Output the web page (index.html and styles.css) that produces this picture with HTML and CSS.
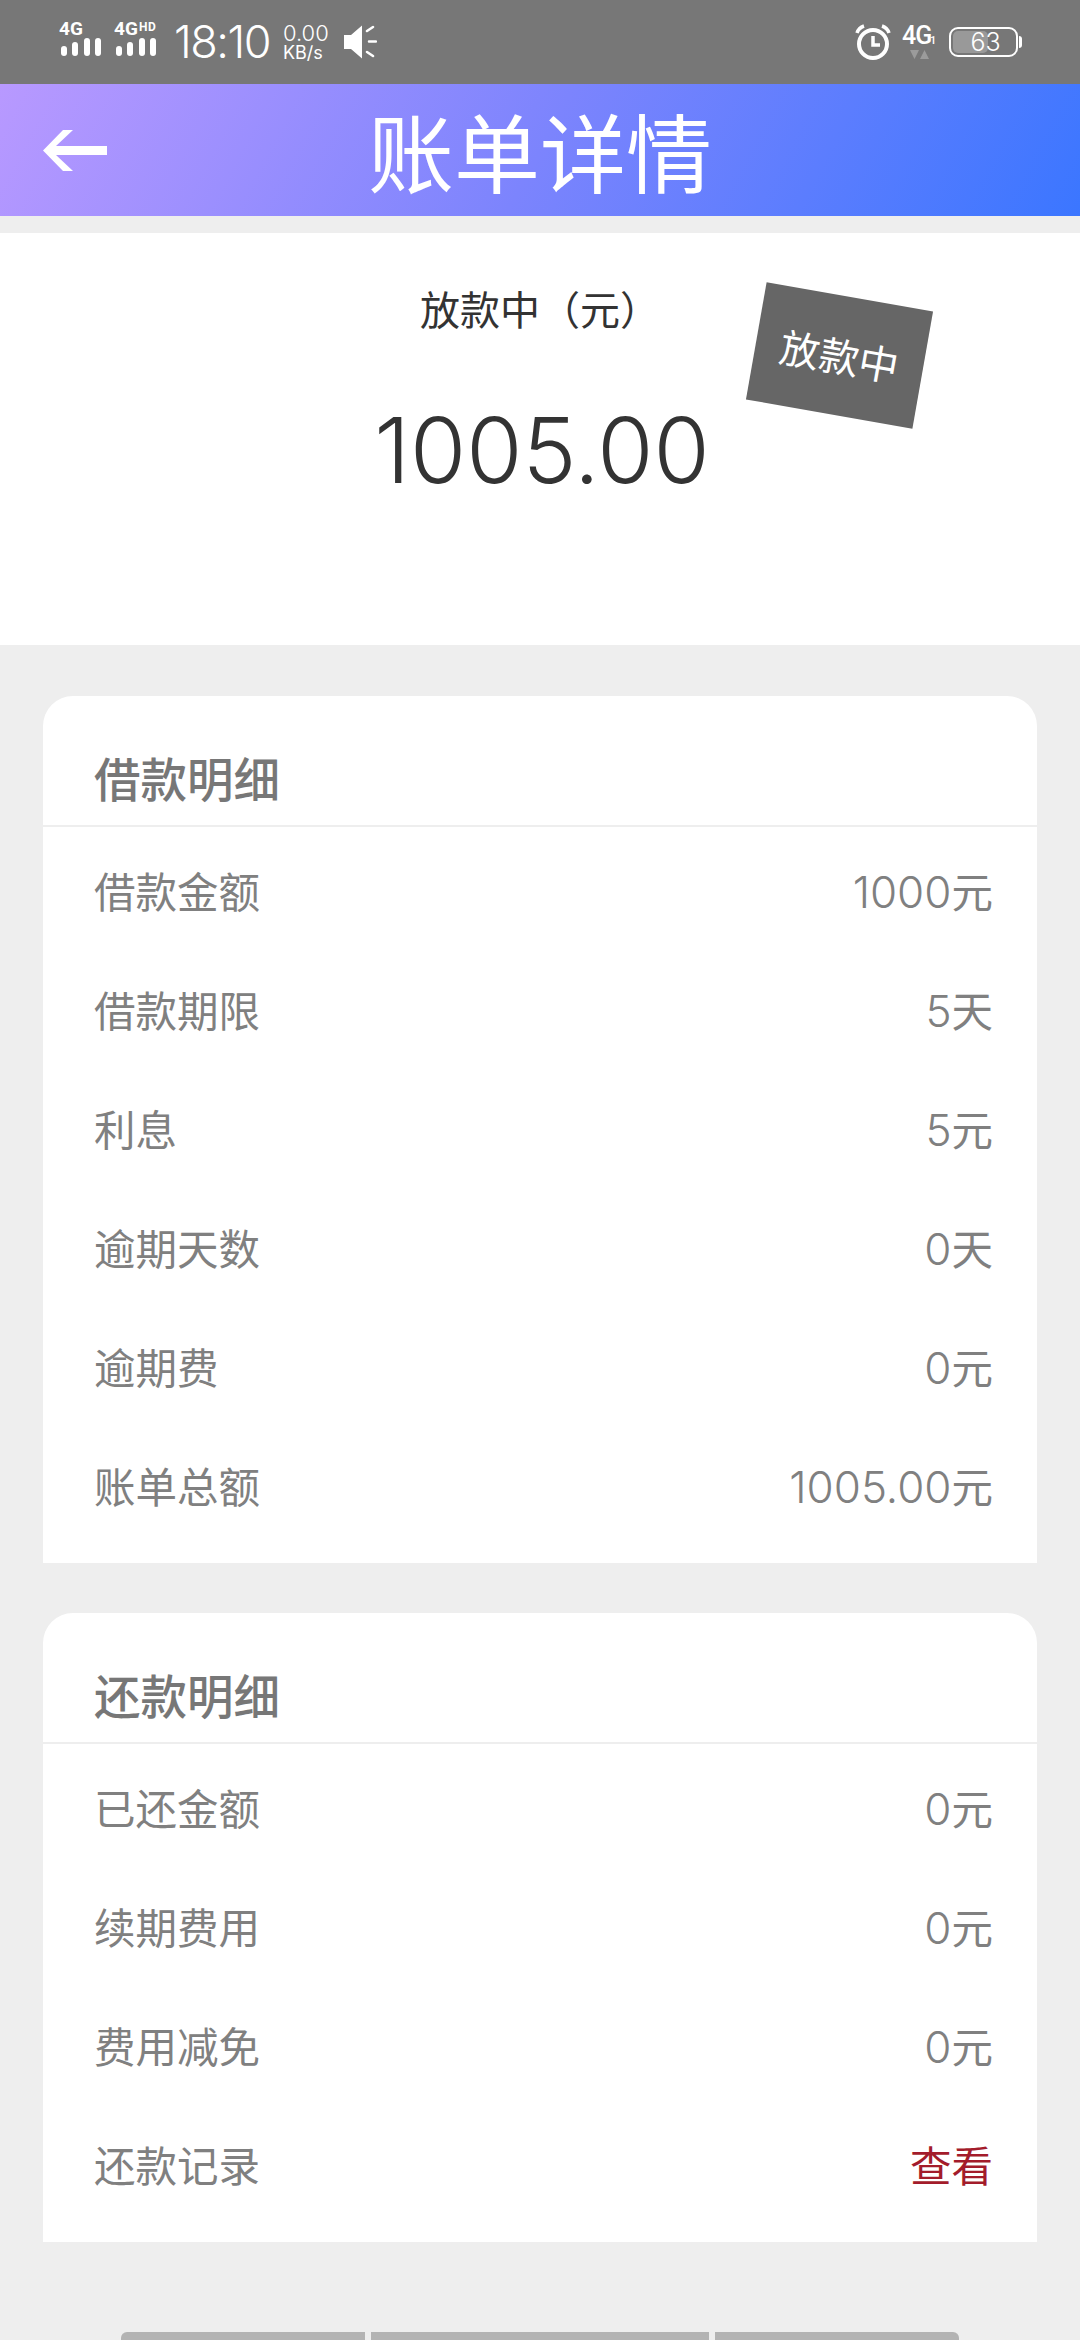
FILE: index.html
```html
<!DOCTYPE html>
<html lang="zh-CN">
<head>
<meta charset="utf-8">
<title>账单详情</title>
<link rel="stylesheet" href="styles.css">
</head>
<body>
<div class="page">
  <div class="status">
    <div class="status-left">
      <svg class="sig" width="44" height="46" viewBox="0 -6 44 46">
        <text class="sig-t" x="0" y="15">4G</text>
        <rect x="2" y="26" width="6" height="10" rx="3"/><rect x="13" y="22" width="6" height="14" rx="3"/><rect x="25" y="18" width="6" height="18" rx="3"/><rect x="36" y="18" width="6" height="18" rx="3"/>
      </svg>
      <svg class="sig2" width="48" height="46" viewBox="0 -6 48 46">
        <text class="sig-t" x="0" y="15">4G</text><text class="sig-h" x="25" y="11">HD</text>
        <rect x="2" y="26" width="6" height="10" rx="3"/><rect x="13" y="22" width="6" height="14" rx="3"/><rect x="25" y="18" width="6" height="18" rx="3"/><rect x="36" y="18" width="6" height="18" rx="3"/>
      </svg>
      <span class="clock">18:10</span>
      <span class="speed"><span>0.00</span><span class="unit">KB/s</span></span>
      <svg class="spk" width="34" height="36" viewBox="0 0 34 36">
        <path class="w" d="M1 11h7L19 1.500v33L8 25H1z"/>
        <path class="ln" d="M24 7l6-4M26 17.500h7M24 28l6 4"/>
      </svg>
    </div>
    <div class="status-right">
      <svg width="36" height="36" viewBox="0 0 36 36">
        <circle class="ln3" cx="18" cy="20" r="14"/>
        <path class="ln2" d="M18 12v9h7"/>
        <path class="ln2" d="M2 9c1-3 4-6 7-7M34 9c-1-3-4-6-7-7"/>
      </svg>
      <svg class="net-icon" width="38" height="42" viewBox="0 -6 38 42">
        <text class="net" x="0" y="20">4G</text><text class="net-s" x="28" y="20">1</text>
        <path class="tri" d="M8 26h9l-4.500 9zM18 35h9l-4.500-9z"/>
      </svg>
      <div class="battery"><div class="batt-body"><span class="batt-fill"></span><span class="batt-num">63</span></div><span class="batt-cap"></span></div>
    </div>
  </div>

  <header class="bar">
    <svg class="back" width="64" height="41" viewBox="0 0 64 41">
      <path d="M0 20.500L20 0h10L13 16h51v9H13l17 16H20z"/>
    </svg>
    <h1 class="title">账单详情</h1>
    <span></span>
  </header>

  <section class="hero">
    <div class="hero-label">放款中（元）</div>
    <div class="hero-amt">1005.00</div>
    <div class="stamp">放款中</div>
  </section>

  <section class="card">
    <h2 class="card-title">借款明细</h2>
    <div class="rows">
      <div class="row"><span>借款金额</span><span class="val"><span class="num">1000</span>元</span></div>
      <div class="row"><span>借款期限</span><span class="val"><span class="num">5</span>天</span></div>
      <div class="row"><span>利息</span><span class="val"><span class="num">5</span>元</span></div>
      <div class="row"><span>逾期天数</span><span class="val"><span class="num">0</span>天</span></div>
      <div class="row"><span>逾期费</span><span class="val"><span class="num">0</span>元</span></div>
      <div class="row"><span>账单总额</span><span class="val"><span class="num">1005.00</span>元</span></div>
    </div>
  </section>

  <section class="card">
    <h2 class="card-title">还款明细</h2>
    <div class="rows">
      <div class="row"><span>已还金额</span><span class="val"><span class="num">0</span>元</span></div>
      <div class="row"><span>续期费用</span><span class="val"><span class="num">0</span>元</span></div>
      <div class="row"><span>费用减免</span><span class="val"><span class="num">0</span>元</span></div>
      <div class="row"><span>还款记录</span><span class="val link">查看</span></div>
    </div>
  </section>

  <div class="bottom">
    <span class="seg seg-a"></span><span class="seg seg-b"></span><span class="seg seg-c"></span>
  </div>
</div>
</body>
</html>
```
FILE: styles.css
```css
* { box-sizing: border-box; }
html, body { margin: 0; padding: 0; }
body {
  width: 1080px;
  height: 2340px;
  overflow: hidden;
  background: #eeeeee;
  font-family: Inter, "Noto Sans CJK SC", sans-serif;
}
.page { width: 1080px; height: 2340px; overflow: hidden; }

/* status bar */
.status {
  height: 84px;
  background: #777777;
  color: #fff;
  display: flex;
  justify-content: space-between;
  align-items: center;
  padding: 0 58px 0 59px;
}
.status-left, .status-right { display: flex; align-items: center; }
.status svg { display: block; fill: #fff; }
.sig-t { font: 700 19px Roboto, sans-serif; fill: #fff; }
.sig-h { font: 700 12px Roboto, sans-serif; fill: #fff; letter-spacing: .5px; }
.sig2 { margin-left: 11px; }
.sig, .sig2 { margin-top: -10px; }
.clock { font-size: 45px; font-weight: 300; letter-spacing: -1.500px; margin-left: 12px; line-height: 46px; }
.speed { display: flex; flex-direction: column; margin-left: 13px; font-size: 22px; font-weight: 300; line-height: 21px; }
.unit { font-size: 18px; font-weight: 400; line-height: 17px; }
.spk { margin-left: 14px; }
.status .w { fill: #fff; }
.status .ln { fill: none; stroke: #fff; stroke-width: 2.500; stroke-linecap: round; }
.status .ln2 { fill: none; stroke: #fff; stroke-width: 3.500; }
.status .ln3 { fill: none; stroke: #fff; stroke-width: 4; }
.net-icon { margin: -6px 0 0 11px; }
.net { font: 500 25px Roboto, sans-serif; fill: #fff; letter-spacing: -1px; }
.net-s { font: 500 11px Roboto, sans-serif; fill: #fff; }
.status .tri { fill: #9b9b9b; }
.battery { display: flex; align-items: center; margin-left: 9px; }
.batt-body {
  position: relative;
  width: 69px;
  height: 30px;
  border: 2.500px solid #fff;
  border-radius: 9px;
  display: flex;
  align-items: center;
  justify-content: center;
}
.batt-fill { position: absolute; left: 2px; top: 2px; bottom: 2px; width: 35px; background: #999; border-radius: 5px; }
.batt-num { position: relative; font-size: 25px; font-weight: 300; line-height: 26px; padding-left: 4px; }
.batt-cap { width: 3px; height: 12px; background: #fff; border-radius: 0 3px 3px 0; margin-left: 1px; }

/* header */
.bar {
  height: 132px;
  background: linear-gradient(118deg, #b899ff 0%, #7c84fd 50%, #3b76ff 100%);
  display: grid;
  grid-template-columns: 1fr auto 1fr;
  align-items: center;
  padding: 0 43px;
  color: #fff;
}
.back { display: block; fill: #fff; }
.title { margin: 0; font-size: 86px; font-weight: 400; line-height: 132px; font-family: "Noto Sans CJK SC", sans-serif; }

/* hero */
.hero {
  position: relative;
  margin: 17px 0 51px;
  height: 412px;
  background: #fff;
  text-align: center;
}
.hero-label {
  padding-top: 47px;
  font-size: 40px;
  line-height: 56px;
  color: #333;
  font-family: "Noto Sans CJK SC", sans-serif;
}
.hero-amt {
  margin-top: 61px;
  padding-left: 4px;
  font-size: 91px;
  line-height: 106px;
  font-weight: 300;
  color: #333;
}
.stamp {
  position: absolute;
  left: 755px;
  top: 63px;
  width: 169px;
  height: 119px;
  transform: rotate(10deg);
  background: #666666;
  color: #fff;
  font-size: 40px;
  line-height: 119px;
  text-align: center;
  font-family: "Noto Sans CJK SC", sans-serif;
}

/* cards */
.card {
  margin: 50px 43px 0;
  background: #fff;
  border-radius: 30px 30px 0 0;
}
.card-title {
  margin: 0;
  height: 131px;
  padding: 48px 0 0 51px;
  border-bottom: 2px solid #eeeeee;
  font-size: 46.500px;
  line-height: 66px;
  font-weight: 500;
  color: #777;
  font-family: "Noto Sans CJK SC", sans-serif;
}
.rows { padding: 3px 44px 19px 51px; }
.row {
  display: flex;
  justify-content: space-between;
  align-items: center;
  height: 119px;
  font-size: 41.500px;
  color: #808080;
  font-family: "Noto Sans CJK SC", sans-serif;
}
.val { font-family: "Noto Sans CJK SC", sans-serif; font-size: 41.500px; color: #808080; }
.num { font-family: Inter, sans-serif; font-size: 44px; font-weight: 300; }
.link { color: #a31c2b; }

/* bottom strip */
.bottom { display: flex; gap: 6px; margin-top: 90px; padding-left: 121px; }
.seg { display: block; height: 12px; background: #b3b3b3; }
.seg-a { width: 244px; border-radius: 6px 0 0 0; }
.seg-b { width: 338px; }
.seg-c { width: 244px; border-radius: 0 6px 0 0; }
```
